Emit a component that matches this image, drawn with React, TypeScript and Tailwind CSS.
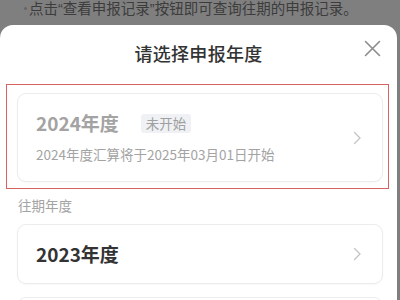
import React from "react";

const font = { fontFamily: '"Noto Sans CJK SC", "Noto Sans", sans-serif' };
const latin = { fontFamily: '"Liberation Sans", sans-serif' };

function Chevron() {
  return (
    <svg width="9" height="14" viewBox="0 0 9 14" fill="none" className="shrink-0">
      <path d="M1.5 1.5 L7 7 L1.5 12.5" stroke="#c4c4c4" strokeWidth="1.3" strokeLinecap="round" strokeLinejoin="round" />
    </svg>
  );
}

function CloseIcon() {
  return (
    <svg width="17" height="17" viewBox="0 0 17 17" fill="none">
      <path d="M1.5 1.5 L15.5 15.5 M15.5 1.5 L1.5 15.5" stroke="#8c8c8c" strokeWidth="1.6" strokeLinecap="round" />
    </svg>
  );
}

export default function App() {
  return (
    <div className="w-[400px] h-[300px] overflow-hidden bg-[#7f7f7f] flex flex-col" style={font}>
      {/* dimmed page behind the sheet */}
      <div className="h-[25px] shrink-0 overflow-hidden">
        <div className="-mt-[3px] flex items-center pl-[24px] text-[14.5px] leading-[22px] text-[#3c3c3c]">
          <span className="w-[3px] h-[3px] rounded-full bg-[#666] mr-[2px]" />
          <span>
            点击<span style={latin}>“</span>查看申报记录<span style={latin}>”</span>按钮即可查询往期的申报记录。
          </span>
        </div>
      </div>

      {/* bottom sheet */}
      <div className="w-[397px] flex-1 min-h-0 overflow-hidden bg-white rounded-t-[13px] flex flex-col">
        <div className="h-[59px] shrink-0 grid grid-cols-[1fr_auto_1fr] items-start">
          <div />
          <div className="pt-[16px] text-[18px] leading-[24px] font-medium text-[#333] tracking-[0.3px]">请选择申报年度</div>
          <div className="flex justify-end pt-[15px] pr-[16px]">
            <CloseIcon />
          </div>
        </div>

        {/* current year, highlighted */}
        <div className="ml-[6px] w-[383px] h-[105px] shrink-0 border border-[#d8625f] pt-[8px] pl-[10px]">
          <div className="w-[366px] h-[89px] rounded-[9px] border border-[#ececec] bg-white shadow-[0_1px_2px_rgba(0,0,0,0.03)] flex items-center pl-[18px] pr-[20px]">
            <div className="flex-1 flex flex-col">
              <div className="flex items-center">
                <span className="text-[19px] leading-[24px] font-bold text-[#a3a3a3]">2024年度</span>
                <span className="ml-[22px] h-[19px] px-[5px] rounded-[3px] bg-[#eff1f5] text-[13.5px] leading-[19px] text-[#a0a0a0]">未开始</span>
              </div>
              <div className="mt-[9px] text-[13.5px] leading-[20px] text-[#a3a3a3]">2024年度汇算将于2025年03月01日开始</div>
            </div>
            <Chevron />
          </div>
        </div>

        <div className="mt-[6px] shrink-0 pl-[18px] text-[13.5px] leading-[20px] text-[#a3a3a3]">往期年度</div>

        <div className="ml-[17px] mt-[9px] shrink-0 w-[366px] h-[60px] rounded-[9px] border border-[#ececec] bg-white shadow-[0_1px_2px_rgba(0,0,0,0.03)] flex items-center pl-[18px] pr-[20px]">
          <span className="flex-1 text-[19px] leading-[24px] font-bold text-[#333]">2023年度</span>
          <Chevron />
        </div>

        <div className="ml-[17px] mt-[13px] shrink-0 w-[366px] h-[60px] rounded-[9px] border border-[#ececec] bg-white" />
      </div>
    </div>
  );
}
